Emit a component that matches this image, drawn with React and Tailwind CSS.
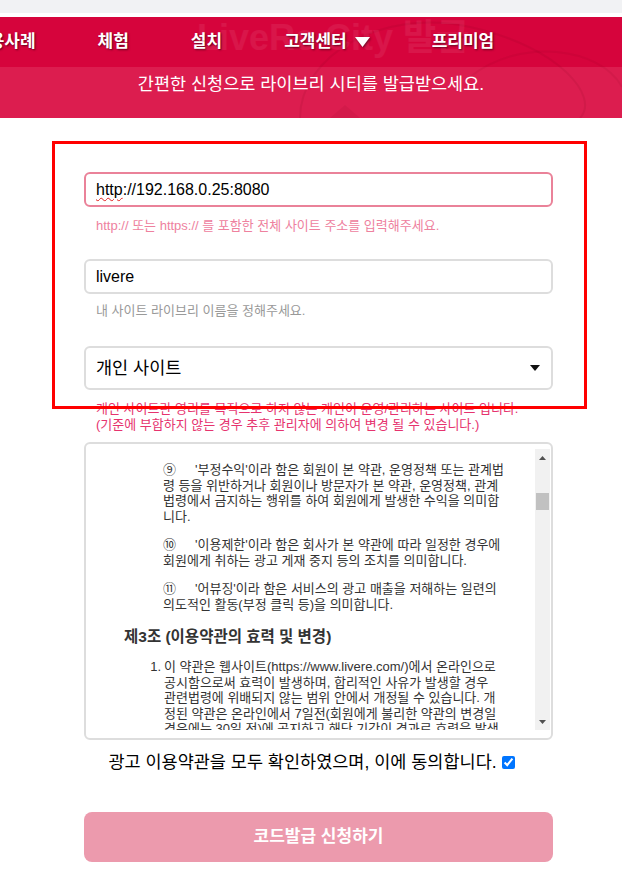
import React from "react";

const navItems = ["활용사례", "체험", "설치", "고객센터", "프리미엄"];

function Header() {
  return (
    <div className="relative overflow-hidden">
      <div className="flex h-[50px] items-center gap-[62px] bg-[#d6043c] ml-[-27px] text-[17px] font-bold text-white [text-shadow:1px_1px_2px_rgba(0,0,0,0.55)]">
        {navItems.map((item) => (
          <div key={item} className="relative z-10 flex items-center gap-[8px] whitespace-nowrap">
            <span>{item}</span>
            {item === "고객센터" && (
              <svg width="15" height="10" viewBox="0 0 15 10" className="drop-shadow-[1px_1px_1px_rgba(0,0,0,0.5)]">
                <polygon points="0,0 15,0 7.5,10" fill="#fff" />
              </svg>
            )}
          </div>
        ))}
      </div>
      <div className="h-[51px] bg-[#dc1d4f] pt-[6px] text-center text-[17.5px] leading-[22px] text-white">
        <span className="relative z-10">간편한 신청으로 라이브리 시티를 발급받으세요.</span>
      </div>

      {/* faint background decoration */}
      <svg
        className="pointer-events-none absolute left-0 top-0"
        width="622"
        height="101"
        viewBox="0 0 622 101"
      >
        <path d="M300 101 C 300 40, 380 -10, 470 10 C 560 30, 600 80, 580 101" fill="none" stroke="rgba(120,0,30,0.10)" strokeWidth="2" />
        <path d="M470 60 C 520 20, 600 30, 622 70" fill="none" stroke="rgba(120,0,30,0.08)" strokeWidth="2" />
        <path d="M330 101 L 345 88 L 360 101" fill="rgba(120,0,30,0.08)" />
      </svg>
      <div className="pointer-events-none absolute left-[197px] top-[3px] text-[36px] font-bold leading-none text-white/[0.07] whitespace-nowrap">
        LiveRe City 발급
      </div>
    </div>
  );
}

function Terms() {
  return (
    <div className="mt-[9px] h-[298px] w-[469px] rounded-md border-2 border-[#dddddd] bg-white pb-[8px] pr-[1px] pt-[5px]">
      <div className="flex h-full">
        <div className="flex-1 overflow-hidden pt-[13px] pl-[38px] text-[13px] leading-[15.5px] text-[#333333] whitespace-nowrap">
          <p className="ml-[39px]">
            <span className="inline-block w-[32px]">⑨</span>'부정수익'이라 함은 회원이 본 약관, 운영정책 또는 관계법
            <br />령 등을 위반하거나 회원이나 방문자가 본 약관, 운영정책, 관계
            <br />법령에서 금지하는 행위를 하여 회원에게 발생한 수익을 의미합
            <br />니다.
          </p>
          <p className="ml-[39px] mt-[13px]">
            <span className="inline-block w-[32px]">⑩</span>'이용제한'이라 함은 회사가 본 약관에 따라 일정한 경우에
            <br />회원에게 취하는 광고 게재 중지 등의 조치를 의미합니다.
          </p>
          <p className="ml-[39px] mt-[13px]">
            <span className="inline-block w-[32px]">⑪</span>'어뷰징'이라 함은 서비스의 광고 매출을 저해하는 일련의
            <br />의도적인 활동(부정 클릭 등)을 의미합니다.
          </p>
          <h3 className="mt-[15px] text-[15.5px] font-bold leading-[20px] text-[#333333]">
            제3조 (이용약관의 효력 및 변경)
          </h3>
          <div className="mt-[12px] flex">
            <span className="w-[40px] pr-[3px] text-right">1.</span>
            <div>
              이 약관은 웹사이트(https://www.livere.com/)에서 온라인으로
              <br />공시함으로써 효력이 발생하며, 합리적인 사유가 발생할 경우
              <br />관련법령에 위배되지 않는 범위 안에서 개정될 수 있습니다. 개
              <br />정된 약관은 온라인에서 7일전(회원에게 불리한 약관의 변경일
              <br />경우에는 30일 전)에 공지하고 해당 기간이 경과로 효력을 발생
            </div>
          </div>
        </div>
        <div className="flex w-[15px] flex-col bg-[#f1f1f1]">
          <div className="flex h-[17px] items-center justify-center">
            <svg width="7" height="4" viewBox="0 0 7 4">
              <polygon points="0,4 7,4 3.5,0" fill="#505050" />
            </svg>
          </div>
          <div className="mt-[27px] mx-[1px] h-[17px] bg-[#c1c1c1]" />
          <div className="flex-1" />
          <div className="flex h-[17px] items-center justify-center">
            <svg width="7" height="4" viewBox="0 0 7 4">
              <polygon points="0,0 7,0 3.5,4" fill="#505050" />
            </svg>
          </div>
        </div>
      </div>
    </div>
  );
}

export default function App() {
  return (
    <div className="min-h-[873px] w-[622px] bg-white font-['Liberation_Sans','Noto_Sans_CJK_KR',sans-serif] text-black">
      <div className="h-[13px] bg-[#f1f2f4]" />
      <div className="h-[4px] bg-white" />
      <Header />

      <div className="relative pl-[84px] pt-[54px] pb-[11px]">
        {/* red annotation frame */}
        <div className="pointer-events-none absolute left-[52px] top-[23px] z-10 h-[268px] w-[535px] border-[3px] border-[#ff0000]" />

        <div className="flex h-[35px] w-[469px] items-center rounded-md border-2 border-[#ea8299] px-[10px] text-[16px]">
          <span className="underline decoration-wavy decoration-[#e02020] decoration-1 underline-offset-2">http</span>
          <span>://192.168.0.25:8080</span>
        </div>
        <p className="mt-[11px] pl-[12px] text-[13px] leading-[16px] text-[#ee819e]">
          http:// 또는 https:// 를 포함한 전체 사이트 주소를 입력해주세요.
        </p>

        <div className="mt-[25px] flex h-[35px] w-[469px] items-center rounded-md border-2 border-[#dddddd] px-[10px] text-[16px]">
          livere
        </div>
        <p className="mt-[9px] pl-[12px] text-[13px] leading-[16px] text-[#999999]">
          내 사이트 라이브리 이름을 정해주세요.
        </p>

        <div className="mt-[27px] flex h-[44px] w-[469px] items-center justify-between rounded-md border-2 border-[#dddddd] pl-[10px] pr-[11px] text-[17.5px]">
          <span>개인 사이트</span>
          <svg width="10" height="6" viewBox="0 0 10 6">
            <polygon points="0,0 10,0 5,6" fill="#111" />
          </svg>
        </div>
        <p className="mt-[11px] pl-[12px] text-[13px] leading-[16px] text-[#e6336e]">
          개인 사이트란 영리를 목적으로 하지 않는 개인이 운영/관리하는 사이트 입니다.
          <br />
          (기준에 부합하지 않는 경우 추후 관리자에 의하여 변경 될 수 있습니다.)
        </p>

        <Terms />

        <div className="mt-[11px] flex w-[469px] items-center justify-center gap-[5px] pr-[14px] text-[17.5px] leading-[22px]">
          <span>광고 이용약관을 모두 확인하였으며, 이에 동의합니다.</span>
          <input type="checkbox" checked readOnly className="h-[13px] w-[13px] accent-[#0075ff]" />
        </div>

        <button className="mt-[39px] h-[50px] w-[469px] rounded-lg bg-[#ec9aad] text-[17px] font-bold text-white">
          코드발급 신청하기
        </button>
      </div>
    </div>
  );
}
